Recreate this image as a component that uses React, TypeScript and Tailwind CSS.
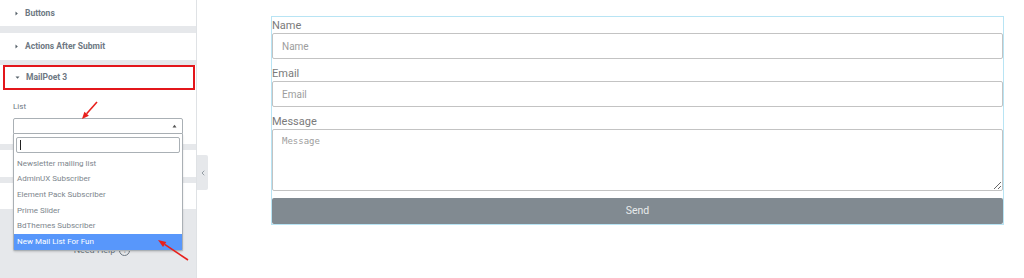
import { ChevronLeft } from "lucide-react";

const lists = [
  "Newsletter mailing list",
  "AdminUX Subscriber",
  "Element Pack Subscriber",
  "Prime Slider",
  "BdThemes Subscriber",
  "New Mail List For Fun",
];

function Caret({ open = false }: { open?: boolean }) {
  return (
    <svg width="5" height="5" viewBox="0 0 5 5" className="shrink-0" aria-hidden>
      {open ? (
        <polygon points="0.5,1.5 4.5,1.5 2.5,3.8" fill="#556068" />
      ) : (
        <polygon points="1.5,0.5 3.8,2.5 1.5,4.5" fill="#556068" />
      )}
    </svg>
  );
}

function SectionRow({ title }: { title: string }) {
  return (
    <div className="flex h-full items-center gap-[6px] pl-[14px]">
      <Caret />
      <span className="text-[8.5px] font-bold text-[#6d7882]">{title}</span>
    </div>
  );
}

function ListSelect() {
  return (
    <div className="relative mx-[13px] w-[170px]">
      <div className="flex h-[16px] items-center justify-end rounded-t-[2px] border border-[#aab0b5] bg-white pr-[5px]">
        <svg width="5" height="4" viewBox="0 0 5 4" aria-hidden>
          <polygon points="0.5,3.5 4.5,3.5 2.5,0.8" fill="#555" />
        </svg>
      </div>
      <div className="absolute left-0 top-[16px] z-10 w-full rounded-b-[2px] border border-t-0 border-[#aab0b5] bg-white shadow-[0_1px_2px_rgba(0,0,0,0.15)]">
        <div className="px-[2px] pt-[3px]">
          <div className="flex h-[16px] items-center rounded-[2px] border border-[#aab0b5] pl-[3px]">
            <div className="h-[10px] w-px bg-[#222]" />
          </div>
        </div>
        <ul className="mt-[3px]">
          {lists.map((item, i) => (
            <li
              key={item}
              className={
                i === lists.length - 1
                  ? "flex h-[15.6px] items-center bg-[#5897fb] px-[3px] text-[8px] text-white"
                  : "flex h-[15.6px] items-center px-[3px] text-[8px] text-[#7d868d]"
              }
            >
              {item}
            </li>
          ))}
        </ul>
      </div>
    </div>
  );
}

function Field({ label, placeholder }: { label: string; placeholder: string }) {
  return (
    <>
      <label className="flex h-[16px] items-center text-[11px] leading-none text-[#7a7a7a]">{label}</label>
      <input
        placeholder={placeholder}
        className="h-[26px] w-full rounded-[2px] border border-[#c3c3c3] bg-white px-[9px] text-[10px] outline-none placeholder:text-[#9d9d9d]"
      />
    </>
  );
}

export default function App() {
  return (
    <div className="relative flex h-[278px] w-[1024px] overflow-hidden bg-white font-['Roboto',sans-serif]">
      <aside className="flex w-[197px] shrink-0 flex-col border-r border-[#dfe2e5] bg-[#e6e8eb]">
        <div className="h-[26px] bg-white">
          <SectionRow title="Buttons" />
        </div>
        <div className="mt-[7px] h-[27px] bg-white">
          <SectionRow title="Actions After Submit" />
        </div>
        <div className="mt-[5px] h-[79px] bg-white">
          <div className="ml-[3px] mr-[1px] flex h-[25px] items-center gap-[6px] border-2 border-[#e3161b] pl-[10px]">
            <Caret open />
            <span className="text-[8.5px] font-bold text-[#6d7882]">MailPoet 3</span>
          </div>
          <div className="mt-[11px] h-[11px] pl-[13px] text-[8px] leading-[11px] text-[#6d7882]">List</div>
          <div className="mt-[6px]">
            <ListSelect />
          </div>
        </div>
        <div className="mt-[6px] h-[27px] bg-white" />
        <div className="mt-[6px] h-[26px] bg-white" />
        <div className="mt-[35px] flex items-center justify-center gap-[4px] pl-[8px] text-[9px] text-[#6d7882]">
          <span>Need Help</span>
          <span className="flex h-[11px] w-[11px] items-center justify-center rounded-full border border-[#6d7882] text-[7px]">
            ?
          </span>
        </div>
      </aside>

      <div className="w-[11px] shrink-0">
        <div className="mt-[155px] flex h-[35px] items-center justify-center rounded-r-[2px] bg-[#e6e8eb] text-[#6d7882]">
          <ChevronLeft size={8} strokeWidth={2} />
        </div>
      </div>

      <main className="flex-1 pl-[63px] pt-[16px]">
        <form className="flex w-[733px] flex-col border border-[#b8e4f4]">
          <Field label="Name" placeholder="Name" />
          <div className="mt-[6px]" />
          <Field label="Email" placeholder="Email" />
          <label className="mt-[6px] flex h-[16px] items-center text-[11px] leading-none text-[#7a7a7a]">Message</label>
          <textarea
            placeholder="Message"
            className="h-[62px] w-full rounded-[2px] border border-[#c3c3c3] bg-white px-[9px] py-[5px] font-['DejaVu_Sans_Mono',monospace] text-[9px] outline-none placeholder:text-[#9d9d9d]"
          />
          <button
            type="button"
            className="mt-[7px] h-[26px] w-full rounded-[2px] bg-[#818a91] text-[10.5px] text-[#e8eaec]"
          >
            Send
          </button>
        </form>
      </main>

      <svg className="pointer-events-none absolute left-0 top-0 z-20" width="1024" height="278" aria-hidden>
        <line x1="97" y1="102" x2="86.6" y2="113.8" stroke="#e8201c" strokeWidth="1.6" />
        <polygon points="82,119 88.9,115.7 84.4,111.8" fill="#e8201c" />
        <line x1="188" y1="260" x2="164.7" y2="244.4" stroke="#e8201c" strokeWidth="1.6" />
        <polygon points="158,240 166.3,241.9 163,246.9" fill="#e8201c" />
      </svg>
    </div>
  );
}
